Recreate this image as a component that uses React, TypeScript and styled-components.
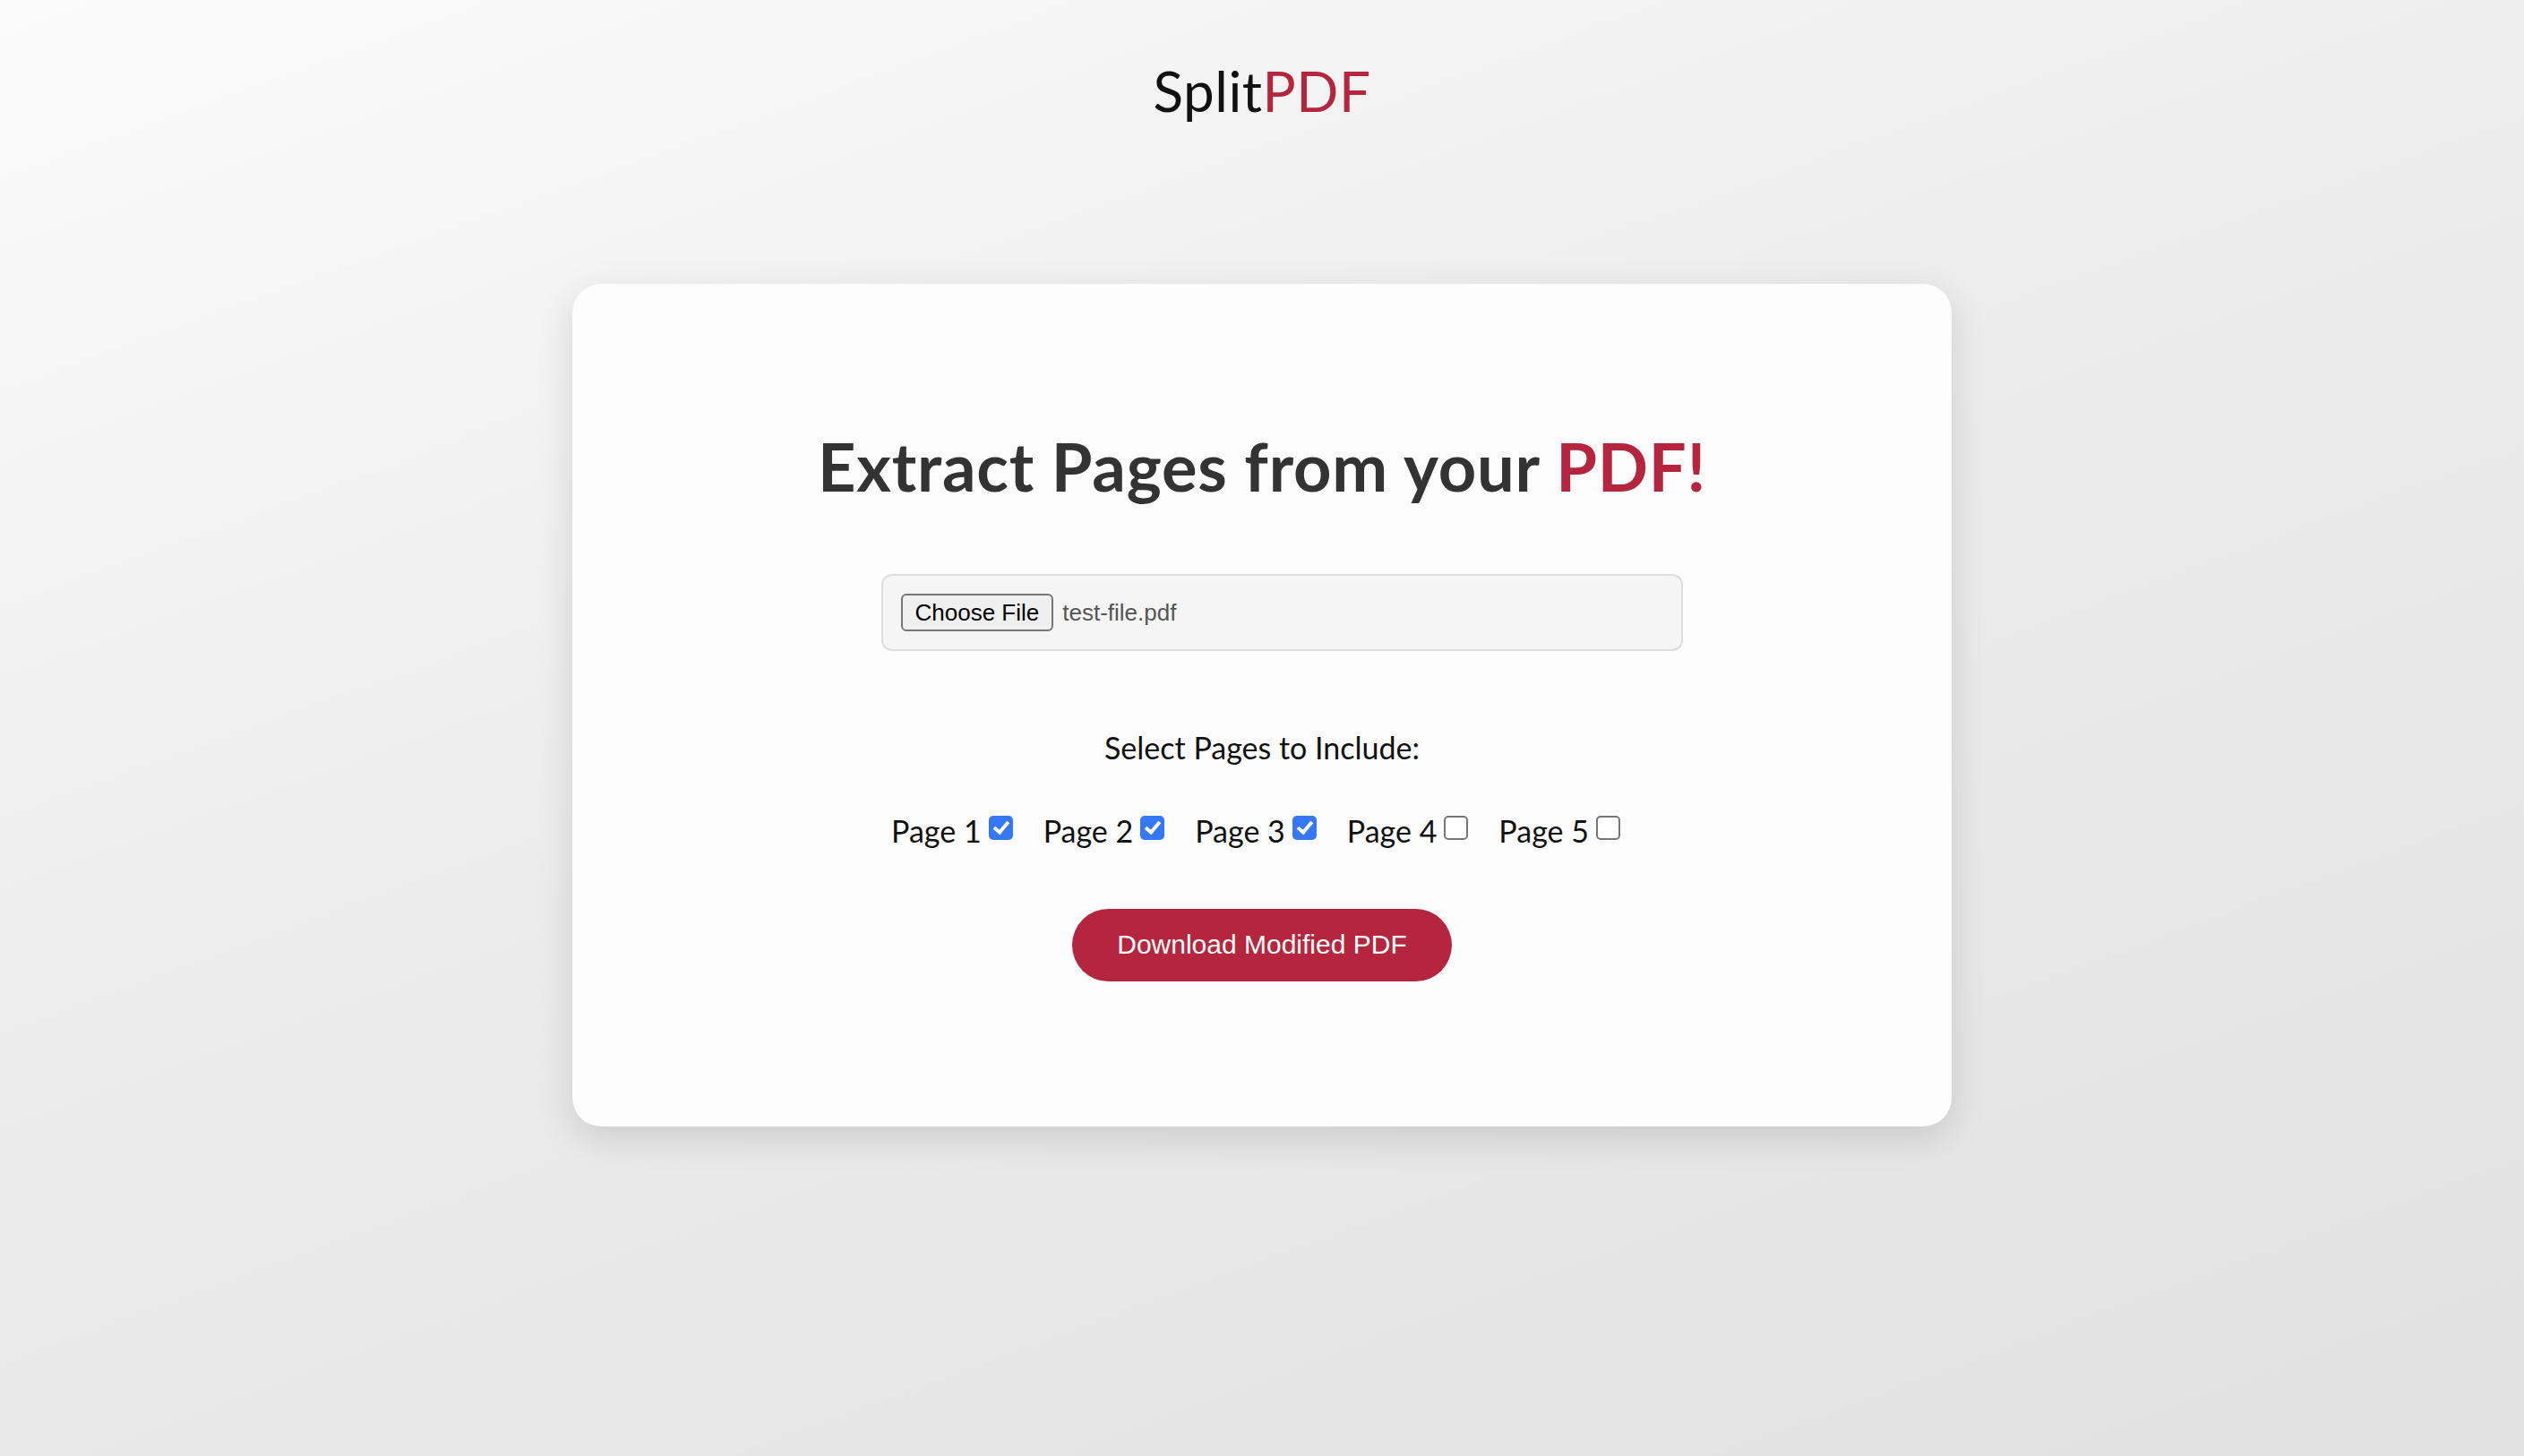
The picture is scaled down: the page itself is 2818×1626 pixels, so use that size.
import styled, { createGlobalStyle } from 'styled-components';

const GlobalStyle = createGlobalStyle`
  html, body {
    margin: 0;
    padding: 0;
  }
  body {
    min-height: 100vh;
    background: linear-gradient(160deg, #fbfbfb 0%, #ececec 45%, #e1e1e1 100%);
    font-family: Lato, "Noto Sans", sans-serif;
  }
`;

const Page = styled.div`
  min-height: 100vh;
  display: flex;
  flex-direction: column;
  align-items: center;
`;

const Logo = styled.h1`
  margin: 64px 0 0;
  font-size: 62px;
  font-weight: 400;
  line-height: 1.2;
  color: #111;
  letter-spacing: 0.5px;
`;

const Accent = styled.span`
  color: #b5253e;
`;

const Card = styled.main`
  margin-top: 179px;
  width: 1540px;
  box-sizing: border-box;
  padding: 160px 0 162px;
  background: #fcfcfc;
  border-radius: 32px;
  box-shadow: 0 12px 40px rgba(0, 0, 0, 0.13);
  display: flex;
  flex-direction: column;
  align-items: center;
`;

const Title = styled.h2`
  margin: 0;
  font-size: 74px;
  font-weight: 700;
  line-height: 1.2;
  color: #333;
  letter-spacing: 0.8px;
`;

const FileBox = styled.div`
  margin: 75px 0 0 44px;
  width: 895px;
  height: 86px;
  box-sizing: border-box;
  padding: 0 20px;
  display: flex;
  align-items: center;
  gap: 10px;
  background: #f5f5f5;
  border: 2px solid #dddddd;
  border-radius: 12px;
  font-family: "Liberation Sans", Arial, sans-serif;
`;

const ChooseButton = styled.button`
  height: 42px;
  padding: 0 14px;
  background: #efefef;
  border: 2px solid #767676;
  border-radius: 6px;
  font-family: "Liberation Sans", Arial, sans-serif;
  font-size: 26px;
  color: #000;
`;

const FileName = styled.span`
  font-size: 26px;
  color: #555;
`;

const SectionLabel = styled.p`
  margin: 88px 0 0;
  font-size: 34px;
  color: #111;
  line-height: 1.2;
`;

const PageList = styled.div`
  margin-top: 51px;
  display: flex;
  align-items: center;
  padding-left: 20px;
`;

const PageOption = styled.label`
  display: flex;
  align-items: center;
  margin-right: 34px;
  font-size: 34px;
  color: #111;
`;

const Check = styled.input.attrs({ type: 'checkbox' })`
  appearance: none;
  margin: 0 0 6px 8px;
  width: 27px;
  height: 27px;
  box-sizing: border-box;
  border: 2px solid #767676;
  border-radius: 5px;
  background: #fff;
  position: relative;

  &:checked {
    border: none;
    background: #3478f6;
  }

  &:checked::after {
    content: '';
    position: absolute;
    left: 9px;
    top: 3px;
    width: 6px;
    height: 13px;
    border: solid #fff;
    border-width: 0 4px 4px 0;
    transform: rotate(40deg);
  }
`;

const DownloadButton = styled.button`
  margin-top: 67px;
  height: 81px;
  padding: 0 50px;
  border: none;
  border-radius: 41px;
  background: #b5253e;
  color: #fff;
  font-family: "Liberation Sans", Arial, sans-serif;
  font-size: 30px;
  cursor: pointer;
`;

const pages = [
  { n: 1, checked: true },
  { n: 2, checked: true },
  { n: 3, checked: true },
  { n: 4, checked: false },
  { n: 5, checked: false },
];

const App = () => {
  return (
    <>
      <GlobalStyle />
      <Page>
        <Logo>
          Split<Accent>PDF</Accent>
        </Logo>
        <Card>
          <Title>
            Extract Pages from your <Accent>PDF!</Accent>
          </Title>
          <FileBox>
            <ChooseButton>Choose File</ChooseButton>
            <FileName>test-file.pdf</FileName>
          </FileBox>
          <SectionLabel>Select Pages to Include:</SectionLabel>
          <PageList>
            {pages.map((p) => (
              <PageOption key={p.n}>
                Page {p.n}
                <Check defaultChecked={p.checked} />
              </PageOption>
            ))}
          </PageList>
          <DownloadButton>Download Modified PDF</DownloadButton>
        </Card>
      </Page>
    </>
  );
};

export default App;
